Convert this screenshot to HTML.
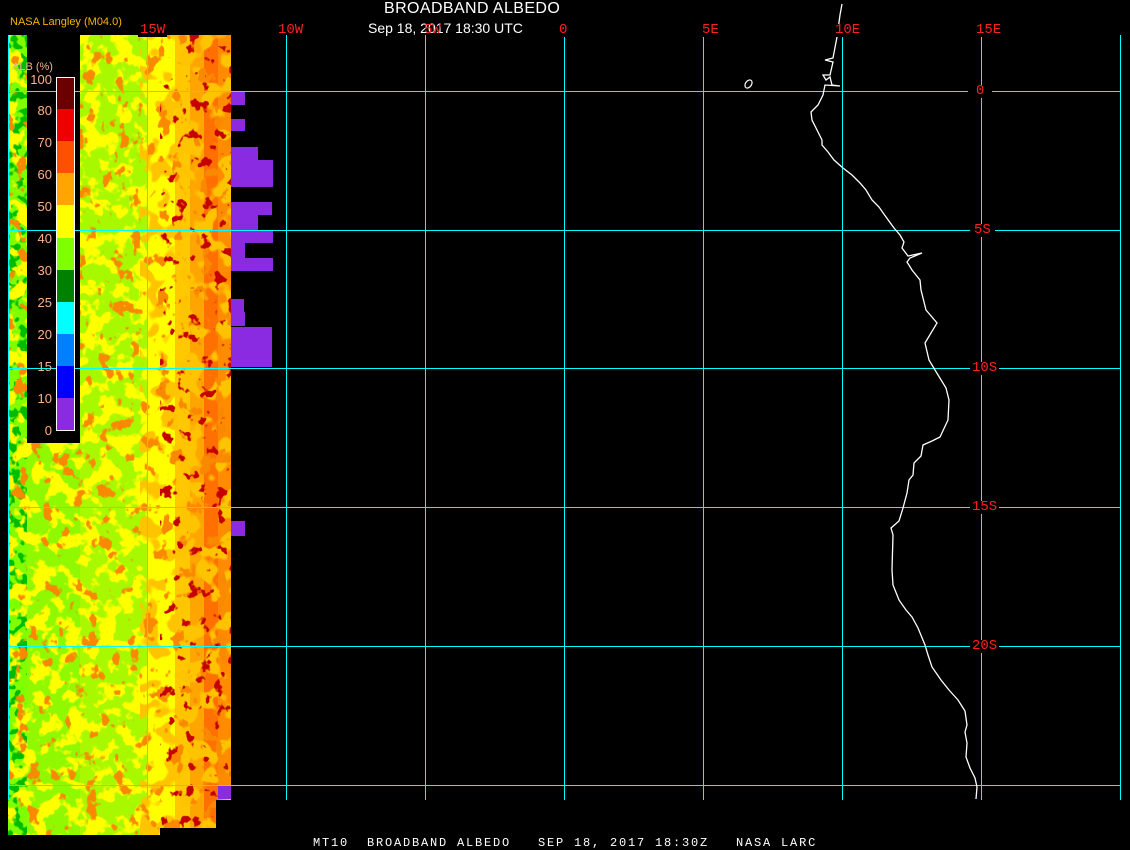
<!DOCTYPE html>
<html><head><meta charset="utf-8"><style>
html,body{margin:0;padding:0;background:#000;}
body{width:1130px;height:850px;position:relative;overflow:hidden;font-family:"Liberation Sans",sans-serif;}
.t{position:absolute;white-space:nowrap;}
.lab{position:absolute;color:#ff2020;font-family:"Liberation Mono",monospace;font-size:14px;line-height:13px;background:#000;padding:0 2px;}
.lg{position:absolute;color:#ffb088;font-size:13px;line-height:13px;text-align:right;width:30px;left:22px;}
</style></head><body>
<svg width="1130" height="850" style="position:absolute;left:0;top:0">
<defs>
<filter id="red" x="0" y="0" width="100%" height="100%">
<feTurbulence type="fractalNoise" baseFrequency="0.07 0.06" numOctaves="3" seed="4"/>
<feColorMatrix type="matrix" values="0 0 0 0 0.95  0 0 0 0 0.25  0 0 0 0 0  16 0 0 0 -9.9"/>
</filter>
<filter id="dred" x="0" y="0" width="100%" height="100%">
<feTurbulence type="fractalNoise" baseFrequency="0.08 0.07" numOctaves="3" seed="11"/>
<feColorMatrix type="matrix" values="0 0 0 0 0.55  0 0 0 0 0  0 0 0 0 0  16 0 0 0 -10.4"/>
</filter>
<filter id="yel" x="0" y="0" width="100%" height="100%">
<feTurbulence type="fractalNoise" baseFrequency="0.06" numOctaves="3" seed="7"/>
<feColorMatrix type="matrix" values="0 0 0 0 1  0 0 0 0 1  0 0 0 0 0  14 0 0 0 -7.0"/>
</filter>
<filter id="org" x="0" y="0" width="100%" height="100%">
<feTurbulence type="fractalNoise" baseFrequency="0.05" numOctaves="2" seed="21"/>
<feColorMatrix type="matrix" values="0 0 0 0 1  0 0 0 0 0.55  0 0 0 0 0  14 0 0 0 -7.3"/>
</filter>
<filter id="grn" x="0" y="0" width="100%" height="100%">
<feTurbulence type="fractalNoise" baseFrequency="0.1" numOctaves="2" seed="3"/>
<feColorMatrix type="matrix" values="0 0 0 0 0  0 0 0 0 0.5  0 0 0 0 0  14 0 0 0 -7.0"/>
</filter>
</defs>
<g shape-rendering="crispEdges">
<rect x="8" y="35" width="19" height="800" fill="#80ff00"/>
<rect x="27" y="35" width="53" height="800" fill="#90f800"/>
<rect x="80" y="35" width="68" height="800" fill="#a8f800"/>
<rect x="148" y="35" width="27" height="800" fill="#ffff00"/>
<rect x="175" y="35" width="15" height="800" fill="#ffc800"/>
<rect x="190" y="35" width="14" height="800" fill="#ffa500"/>
<rect x="204" y="35" width="14" height="800" fill="#ff7000"/>
<rect x="218" y="35" width="13" height="800" fill="#ff8c00"/>
</g>
<rect x="8" y="35" width="19" height="800" filter="url(#grn)"/>
<rect x="8" y="35" width="167" height="800" filter="url(#yel)"/>
<rect x="140" y="35" width="91" height="800" filter="url(#org)"/>
<rect x="8" y="35" width="223" height="800" filter="url(#red)"/>
<rect x="160" y="35" width="71" height="800" filter="url(#dred)"/>
<rect x="216" y="800" width="20" height="50" fill="#000"/>
<rect x="160" y="828" width="60" height="10" fill="#000"/>
<rect x="8" y="835" width="160" height="15" fill="#000"/>
<rect x="27" y="35" width="53" height="408" fill="#000"/>
<g fill="#8a2be2" shape-rendering="crispEdges">
<rect x="231" y="92" width="14" height="13"/><rect x="231" y="119" width="14" height="12"/>
<rect x="231" y="147" width="27" height="13"/><rect x="231" y="160" width="42" height="27"/>
<rect x="231" y="202" width="41" height="13"/><rect x="231" y="215" width="27" height="15"/>
<rect x="231" y="230" width="42" height="13"/><rect x="231" y="243" width="14" height="15"/>
<rect x="231" y="258" width="42" height="13"/><rect x="231" y="299" width="13" height="13"/>
<rect x="231" y="312" width="14" height="14"/><rect x="231" y="327" width="41" height="40"/>
<rect x="231" y="521" width="14" height="15"/><rect x="218" y="785" width="13" height="14"/>
</g>
<g fill="#00ffff" shape-rendering="crispEdges">
<rect x="8" y="35" width="1" height="765"/><rect x="147" y="35" width="1" height="765"/>
<rect x="286" y="35" width="1" height="765"/><rect x="425" y="35" width="1" height="765"/>
<rect x="564" y="35" width="1" height="765"/><rect x="703" y="35" width="1" height="765"/>
<rect x="842" y="35" width="1" height="765"/><rect x="981" y="35" width="1" height="765"/>
<rect x="1120" y="35" width="1" height="765"/>
<rect x="8" y="91" width="1113" height="1"/><rect x="8" y="230" width="1113" height="1"/>
<rect x="8" y="368" width="1113" height="1"/><rect x="8" y="507" width="1113" height="1"/>
<rect x="8" y="646" width="1113" height="1"/><rect x="8" y="785" width="1113" height="1"/>
</g>
<g shape-rendering="crispEdges">
<rect x="56" y="77" width="18" height="32" fill="#6a0000"/>
<rect x="56" y="109" width="18" height="32" fill="#ee0000"/>
<rect x="56" y="141" width="18" height="32" fill="#ff5000"/>
<rect x="56" y="173" width="18" height="32" fill="#ffa500"/>
<rect x="56" y="205" width="18" height="33" fill="#ffff00"/>
<rect x="56" y="238" width="18" height="32" fill="#80ff00"/>
<rect x="56" y="270" width="18" height="32" fill="#008000"/>
<rect x="56" y="302" width="18" height="32" fill="#00ffff"/>
<rect x="56" y="334" width="18" height="32" fill="#0080ff"/>
<rect x="56" y="366" width="18" height="32" fill="#0000ff"/>
<rect x="56" y="398" width="18" height="32" fill="#8a2be2"/>
<rect x="56.5" y="77.5" width="18" height="353" fill="none" stroke="#fff" stroke-width="1"/>
</g>
<polyline fill="none" stroke="#fff" stroke-width="1.3" points="842,4 840,15 837,37 833,58 825,60 833,62 830,75 823,75 826,80 830,77 832,85 840,86 825,85 823,95 818,105 811,112 812,120 818,132 822,140 822,145 828,152 834,160 843,168 852,175 860,183 866,190 872,200 879,207 886,217 894,228 900,235 904,242 902,248 908,256 922,253 910,258 907,262 912,270 920,280 921,290 926,310 937,323 925,343 929,360 935,370 946,388 949,400 948,420 940,437 932,441 923,445 921,456 914,463 913,475 909,480 907,493 903,508 899,521 891,528 893,535 892,570 893,585 899,600 906,610 912,617 918,628 925,645 928,655 932,667 941,680 949,690 958,700 965,711 967,725 965,732 967,743 966,757 970,768 975,778 977,787 976,799"/>
<ellipse cx="748.5" cy="84" rx="3" ry="4.5" transform="rotate(35 748.5 84)" fill="none" stroke="#fff" stroke-width="1.2"/>
</svg>
<div class="t" style="left:384px;top:0px;color:#fff;font-size:16px;letter-spacing:0.4px;">BROADBAND ALBEDO</div>
<div class="t" style="left:368px;top:20px;color:#fff;font-size:14px;">Sep 18, 2017 18:30 UTC</div>
<div class="t" style="left:10px;top:16px;color:#ffb000;font-size:11px;">NASA Langley (M04.0)</div>
<div class="t" style="left:12px;top:61px;color:#ffb088;font-size:11px;">ALB (%)</div>
<div class="lab" style="left:138px;top:24px;">15W</div>
<div class="lab" style="left:276px;top:24px;background:none">10W</div>
<div class="lab" style="left:422px;top:24px;background:none">5W</div>
<div class="lab" style="left:557px;top:24px;">0</div>
<div class="lab" style="left:700px;top:24px;">5E</div>
<div class="lab" style="left:833px;top:24px;">10E</div>
<div class="lab" style="left:974px;top:24px;">15E</div>
<div class="lab" style="left:968px;top:85px;padding:0 8px">0</div>
<div class="lab" style="left:970px;top:224px;padding:0 4px">5S</div>
<div class="lab" style="left:970px;top:362px;">10S</div>
<div class="lab" style="left:970px;top:501px;">15S</div>
<div class="lab" style="left:970px;top:640px;">20S</div>
<div class="lg" style="top:73px">100</div>
<div class="lg" style="top:104px">80</div>
<div class="lg" style="top:136px">70</div>
<div class="lg" style="top:168px">60</div>
<div class="lg" style="top:200px">50</div>
<div class="lg" style="top:232px">40</div>
<div class="lg" style="top:264px">30</div>
<div class="lg" style="top:296px">25</div>
<div class="lg" style="top:328px">20</div>
<div class="lg" style="top:360px">15</div>
<div class="lg" style="top:392px">10</div>
<div class="lg" style="top:424px">0</div>
<div class="t" style="left:313px;top:836px;color:#fff;font-family:'Liberation Mono',monospace;font-size:12px;letter-spacing:1.8px;white-space:pre;">MT10  BROADBAND ALBEDO   SEP 18, 2017 18:30Z   NASA LARC</div>
</body></html>
